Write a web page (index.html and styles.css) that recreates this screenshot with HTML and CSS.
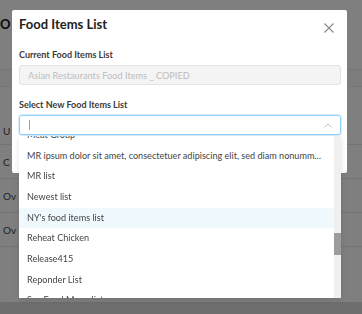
FILE: index.html
```html
<!DOCTYPE html>
<html>
<head>
<meta charset="utf-8">
<link rel="stylesheet" href="styles.css">
</head>
<body>
<div class="page">
  <div class="page-head"><h1 class="page-title">O</h1></div>
  <div class="table">
    <div class="thead"></div>
    <div class="row row-u"><span>U</span></div>
    <div class="row"><span>C</span></div>
    <div class="row"><span>Ov</span></div>
    <div class="row"><span>Ov</span></div>
  </div>
  <div class="page-foot"></div>
</div>

<div class="overlay"></div>

<div class="modal">
  <div class="modal-head">
    <h2 class="modal-title">Food Items List</h2>
    <svg class="close" width="10" height="10" viewBox="0 0 10 10"><path d="M0.5 0.5 L9.5 9.5 M9.5 0.5 L0.5 9.5" stroke="#8a8a8a" stroke-width="1.1" fill="none"/></svg>
  </div>
  <div class="field field-first">
    <label class="label">Current Food Items List</label>
    <div class="input disabled">Asian Restaurants Food Items _ COPIED</div>
  </div>
  <div class="field">
    <label class="label">Select New Food Items List</label>
    <div class="input focused">
      <span class="caret"></span>
      <svg class="chev" width="8" height="5" viewBox="0 0 8 5"><path d="M0.5 4.5 L4 1 L7.5 4.5" stroke="#bdbdbd" stroke-width="1" fill="none"/></svg>
    </div>
  </div>
</div>

<div class="dropdown">
  <div class="options">
    <div class="opt">Meat Group</div>
    <div class="opt">MR ipsum dolor sit amet, consectetuer adipiscing elit, sed diam nonummy nibh euismod tincidunt</div>
    <div class="opt">MR list</div>
    <div class="opt">Newest list</div>
    <div class="opt active">NY's food items list</div>
    <div class="opt">Reheat Chicken</div>
    <div class="opt">Release415</div>
    <div class="opt">Reponder List</div>
    <div class="opt">Sea Food Menu list</div>
  </div>
  <div class="scroll"><div class="thumb"></div></div>
</div>
</body>
</html>
```
FILE: styles.css
```css
* { box-sizing: border-box; }
html, body { margin: 0; padding: 0; }
body {
  width: 362px;
  height: 314px;
  overflow: hidden;
  font-family: Lato, "Open Sans", sans-serif;
  background: #fff;
}
.page {
  height: 314px;
  display: flex;
  flex-direction: column;
}
.page-head {
  height: 69px;
  padding: 16px 0 0 0;
}
.page-title {
  margin: 0;
  font-size: 13px;
  line-height: 16px;
  font-weight: 700;
  color: #111;
}
.table { flex: 1; }
.thead {
  height: 18px;
  border-top: 1px solid #ececec;
  background: #fafafa;
  border-bottom: 1px solid #ececec;
}
.row {
  height: 34px;
  border-bottom: 1px solid #e8e8e8;
  display: flex;
  align-items: center;
  padding-left: 3px;
  font-size: 10px;
  color: #444;
}
.row-u { height: 58px; padding-top: 30px; }
.page-foot {
  height: 12px;
  background: #dcdcdc;
}
.overlay {
  position: fixed;
  inset: 0;
  background: rgba(0,0,0,0.5);
}
.modal {
  position: fixed;
  left: 12px;
  top: 10px;
  width: 335px;
  height: 163px;
  background: #fff;
  border-radius: 2px;
  padding: 6px 6px 0 7px;
}
.modal-head {
  display: flex;
  justify-content: space-between;
  align-items: flex-start;
  height: 16px;
}
.modal-title {
  margin: 0;
  font-size: 13px;
  line-height: 16px;
  font-weight: 700;
  color: #222;
}
.close { margin: 7px 7px 0 0; }
.field { margin-top: 14px; }
.field-first { margin-top: 17px; }
.label {
  display: block;
  font-size: 9px;
  line-height: 12px;
  font-weight: 700;
  color: #3a3a3a;
  margin-bottom: 4px;
}
.input {
  height: 20px;
  width: 322px;
  border-radius: 3px;
  display: flex;
  align-items: center;
  padding-left: 8px;
  font-size: 9.2px;
}
.disabled {
  background: #f4f4f4;
  border: 1px solid #e3e3e3;
  color: #bdbdbd;
}
.focused {
  border: 1px solid #8fd1fb;
  box-shadow: 0 0 0 1px rgba(143,209,251,0.35);
  justify-content: space-between;
  padding-right: 8px;
  padding-left: 9px;
}
.caret {
  width: 1px;
  height: 10px;
  background: #a0a0a0;
}
.dropdown {
  position: fixed;
  left: 19px;
  top: 136px;
  width: 322px;
  height: 162px;
  background: #fff;
  overflow: hidden;
  display: flex;
  box-shadow: 0 2px 6px rgba(0,0,0,0.12);
}
.options {
  flex: 1;
  min-width: 0;
  margin-top: -11px;
}
.opt {
  height: 20.67px;
  line-height: 20.67px;
  padding: 0 10px 0 8px;
  font-size: 9.1px;
  color: #454545;
  white-space: nowrap;
  overflow: hidden;
  text-overflow: ellipsis;
}
.opt.active { background: #eff9fe; }
.scroll {
  width: 7px;
  background: #f1f0ee;
  padding-top: 97px;
}
.thumb {
  height: 22px;
  background: #9c9c9c;
}
```
